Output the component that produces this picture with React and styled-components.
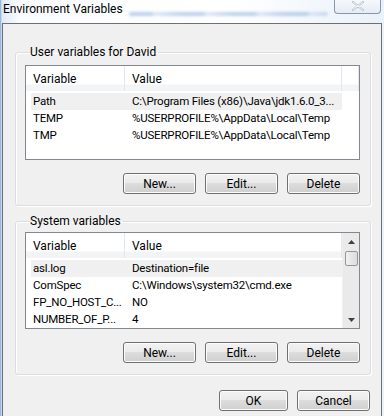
import styled, { createGlobalStyle } from "styled-components";

const GlobalStyle = createGlobalStyle`
  html, body {
    margin: 0;
    padding: 0;
  }
  body {
    font-family: "Segoe UI", Roboto, "Liberation Sans", Arial, sans-serif;
    font-size: 12px;
    color: #000;
    background: #fff;
  }
`;

const StyledWindow = styled.div`
  width: 384px;
  height: 416px;
  overflow: hidden;
  display: flex;
  flex-direction: column;
  background: linear-gradient(90deg, #7fa7d6 0px, #dfeaf6 2px, #fbfcfe 20px, #ffffff 60%, #e9f1fa 100%);
`;

const StyledTitleBar = styled.div`
  height: 23px;
  flex: none;
  display: flex;
  align-items: flex-start;
  padding-left: 3px;
`;

const StyledTitle = styled.div`
  margin-top: 2px;
  font-size: 12px;
  line-height: 15px;
  color: #000;
  flex: none;
`;

/* blurred desktop behind the aero glass */
const StyledGlass = styled.div`
  flex: 1;
  height: 4px;
  margin: 12px 6px 0 6px;
  border-radius: 2px;
  background: repeating-linear-gradient(
    90deg,
    #8fb3e0 0px,
    #8fb3e0 22px,
    #c9dbf0 26px,
    #a9c4e8 40px,
    #8fb3e0 52px
  );
  opacity: 0.6;
  filter: blur(1.5px);
`;

const StyledCloseButton = styled.div`
  flex: none;
  margin-right: 3px;
  margin-top: -1px;
  width: 45px;
  height: 14px;
  border: 1px solid #8a96a6;
  border-top: none;
  border-radius: 0 0 4px 4px;
  background: linear-gradient(#f7f9fc, #e6ecf4);
  display: flex;
  justify-content: center;
  align-items: center;
`;

const StyledPanel = styled.div`
  flex: 1;
  margin: 0 2px 0 2px;
  border: 1px solid #6f6f6f;
  border-bottom: none;
  background: #f0f0f0;
  padding: 21px 10px 0 12px;
  display: flex;
  flex-direction: column;
`;

const StyledGroup = styled.fieldset`
  margin: 0;
  margin-top: ${(p) => p.$mt || 0}px;
  padding: ${(p) => p.$pt}px 10px 11px 9px;
  border: 1px solid #d5dfe5;
  border-radius: 3px;
  box-shadow: inset 1px 1px 0 #fff, 1px 1px 0 #fff;
  min-width: 0;

  & > legend {
    padding: 0 2px 0 0;
    margin-left: 5px;
    font-size: 12px;
    line-height: 14px;
    color: #000;
  }
`;

const StyledList = styled.div`
  height: ${(p) => p.$h}px;
  border: 1px solid #828790;
  background: #fff;
  display: flex;
  overflow: hidden;
`;

const StyledListBody = styled.div`
  flex: 1;
  display: flex;
  flex-direction: column;
`;

const StyledHeader = styled.div`
  height: 25px;
  flex: none;
  display: flex;
  margin-bottom: 2px;
  background: linear-gradient(#ffffff 0px, #ffffff 18px, #f3f4f6 19px, #f3f4f6 100%);
`;

const StyledHeaderCell = styled.div`
  width: ${(p) => p.$w}px;
  flex: none;
  padding-left: 7px;
  box-sizing: border-box;
  line-height: 27px;
  border-right: 1px solid #e3e6eb;
  color: #000;
`;

const StyledHeaderFiller = styled.div`
  flex: 1;
  border-right: ${(p) => (p.$edge ? "1px solid #e3e6eb" : "none")};
`;

const StyledRow = styled.div`
  height: 17px;
  display: flex;
  margin-left: 5px;
  width: 311px;
  background: ${(p) => (p.$selected ? "#f0f0f0" : "transparent")};
  font-size: 11.5px;
  letter-spacing: -0.2px;
  line-height: 17px;
  white-space: nowrap;
`;

const StyledCell = styled.div`
  width: ${(p) => p.$w}px;
  flex: none;
  padding-left: 2px;
  box-sizing: border-box;
  overflow: hidden;
`;

const StyledScrollbar = styled.div`
  width: 17px;
  flex: none;
  background: #eaeaea;
  border-left: 1px solid #f0f0f0;
  display: flex;
  flex-direction: column;
  align-items: center;
`;

const StyledArrow = styled.div`
  height: 17px;
  display: flex;
  align-items: center;
  justify-content: center;
`;

const StyledThumb = styled.div`
  width: 13px;
  height: 15px;
  margin-top: 1px;
  border: 1px solid #979797;
  border-radius: 2px;
  box-sizing: border-box;
  background: linear-gradient(90deg, #f1f1f1, #dcdcdc);
`;

const StyledTrack = styled.div`
  flex: 1;
`;

const StyledButtonRow = styled.div`
  display: flex;
  justify-content: flex-end;
  gap: 9px;
  margin-top: ${(p) => p.$top}px;
  padding-right: ${(p) => p.$right || 0}px;
`;

const StyledButton = styled.button`
  width: ${(p) => p.$w || 73}px;
  height: 21px;
  padding: 0;
  border: 1px solid #707070;
  border-radius: 3px;
  background: linear-gradient(#f2f2f2 0%, #ebebeb 45%, #dddddd 50%, #cfcfcf 100%);
  box-shadow: inset 0 0 0 1px #fcfcfc;
  font-family: inherit;
  font-size: 12px;
  color: #000;
`;

const userVars = [
  ["Path", "C:\\Program Files (x86)\\Java\\jdk1.6.0_3..."],
  ["TEMP", "%USERPROFILE%\\AppData\\Local\\Temp"],
  ["TMP", "%USERPROFILE%\\AppData\\Local\\Temp"],
];

const systemVars = [
  ["asl.log", "Destination=file"],
  ["ComSpec", "C:\\Windows\\system32\\cmd.exe"],
  ["FP_NO_HOST_C...", "NO"],
  ["NUMBER_OF_P...", "4"],
];

function VarList({ rows, scroll, height }) {
  return (
    <StyledList $h={height}>
      <StyledListBody>
        <StyledHeader>
          <StyledHeaderCell $w={99}>Variable</StyledHeaderCell>
          <StyledHeaderCell $w={217}>Value</StyledHeaderCell>
          <StyledHeaderFiller $edge={!scroll} />
        </StyledHeader>
        {rows.map(([name, value], i) => (
          <StyledRow key={name} $selected={i === 0}>
            <StyledCell $w={99}>{name}</StyledCell>
            <StyledCell $w={212}>{value}</StyledCell>
          </StyledRow>
        ))}
      </StyledListBody>
      {scroll && (
        <StyledScrollbar>
          <StyledArrow>
            <svg width="7" height="4" viewBox="0 0 7 4">
              <path d="M3.5 0 L7 4 L0 4 Z" fill="#404040" />
            </svg>
          </StyledArrow>
          <StyledThumb />
          <StyledTrack />
          <StyledArrow>
            <svg width="7" height="4" viewBox="0 0 7 4">
              <path d="M0 0 L7 0 L3.5 4 Z" fill="#404040" />
            </svg>
          </StyledArrow>
        </StyledScrollbar>
      )}
    </StyledList>
  );
}

function Buttons() {
  return (
    <StyledButtonRow $top={13}>
      <StyledButton>New...</StyledButton>
      <StyledButton>Edit...</StyledButton>
      <StyledButton>Delete</StyledButton>
    </StyledButtonRow>
  );
}

export default function App() {
  return (
    <>
      <GlobalStyle />
      <StyledWindow>
        <StyledTitleBar>
          <StyledTitle>Environment Variables</StyledTitle>
          <StyledGlass />
          <StyledCloseButton>
            <svg width="12" height="10" viewBox="0 0 12 10">
              <path
                d="M1 1 L11 9 M11 1 L1 9"
                stroke="#b8c2cf"
                strokeWidth="2.2"
                strokeLinecap="round"
              />
              <path d="M1 1 L11 9 M11 1 L1 9" stroke="#ffffff" strokeWidth="0.8" />
            </svg>
          </StyledCloseButton>
        </StyledTitleBar>
        <StyledPanel>
          <StyledGroup $pt={6}>
            <legend>User variables for David</legend>
            <VarList rows={userVars} height={93} />
            <Buttons />
          </StyledGroup>
          <StyledGroup $mt={8} $pt={4}>
            <legend>System variables</legend>
            <VarList rows={systemVars} scroll height={95} />
            <Buttons />
          </StyledGroup>
          <StyledButtonRow $top={15} $right={1}>
            <StyledButton $w={69}>OK</StyledButton>
            <StyledButton $w={73}>Cancel</StyledButton>
          </StyledButtonRow>
        </StyledPanel>
      </StyledWindow>
    </>
  );
}
